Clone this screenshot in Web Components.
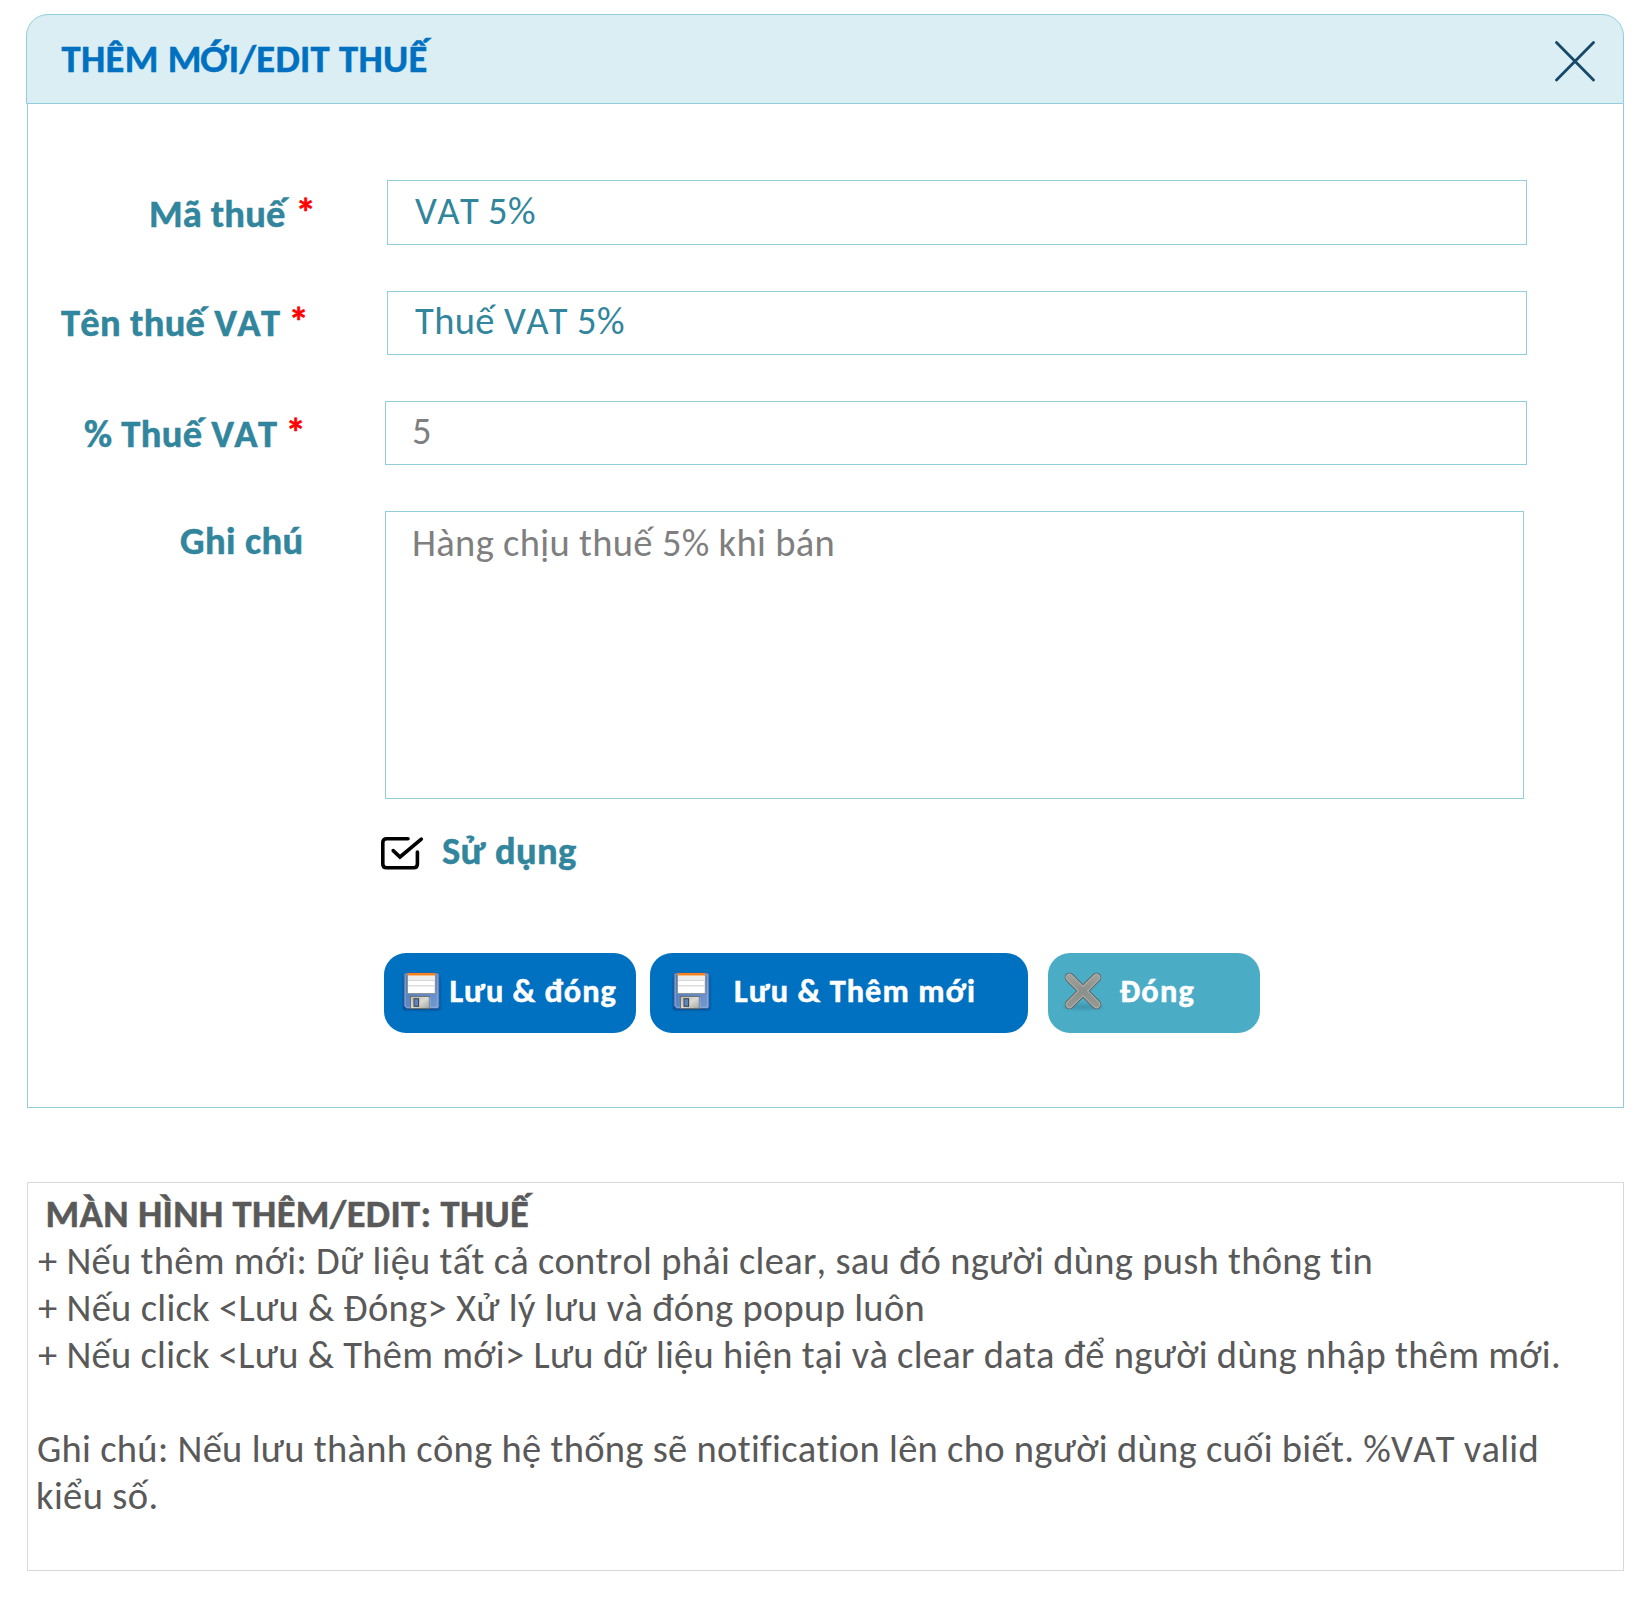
<!DOCTYPE html>
<html lang="vi">
<head>
<meta charset="utf-8">
<title>Thêm mới/Edit thuế</title>
<style>
body{margin:0;background:#fff;font-family:Carlito,Calibri,Lato,"Liberation Sans",sans-serif;font-size:38.5px;line-height:47px;color:#595959}
</style>
</head>
<body>
<tax-page></tax-page>
<script>
// One line of text whose ink spans exactly `w` pixels, tracked with letter-spacing.
class FitText extends HTMLElement {
  connectedCallback() {
    const r = this.attachShadow({mode: 'open'});
    r.innerHTML = `<style>:host{display:block;flex:none;white-space:pre;font-variant-ligatures:none;font-kerning:none}span{display:inline-block}</style><span><slot></slot></span>`;
    const span = r.querySelector('span'), text = this.textContent, cs = getComputedStyle(this);
    const c = document.createElement('canvas').getContext('2d');
    c.font = `${cs.fontWeight} ${cs.fontSize} ${cs.fontFamily}`;
    const chars = [...text];
    const left = -c.measureText(chars[0]).actualBoundingBoxLeft;
    const m = c.measureText(chars[chars.length - 1]);
    const right = m.width - m.actualBoundingBoxRight;
    const ink = span.getBoundingClientRect().width - left - right;
    const w = +this.getAttribute('w');
    if (chars.length > 1) span.style.letterSpacing = (w - ink) / (chars.length - 1) + 'px';
    span.style.marginLeft = -left + 'px';
    this.style.width = w + 'px';
    if (+cs.fontWeight >= 700) span.style.webkitTextStroke = '0.5px currentColor';
  }
}
customElements.define('fit-text', FitText);

class CloseIcon extends HTMLElement {
  connectedCallback() {
    this.attachShadow({mode: 'open'}).innerHTML = `<style>:host{display:block;width:40px;height:41px}svg{display:block}</style>
    <svg width="40" height="41" viewBox="0 0 40 41"><path d="M1.5 1.5 38.5 39M38.5 1.5 1.5 39" fill="none" stroke="#17496b" stroke-width="2.8" stroke-linecap="round"/></svg>`;
  }
}
customElements.define('close-icon', CloseIcon);

class CheckIcon extends HTMLElement {
  connectedCallback() {
    this.attachShadow({mode: 'open'}).innerHTML = `<style>:host{display:block;width:44px;height:35px}svg{display:block}</style>
    <svg width="44" height="35" viewBox="0 0 44 35"><g fill="none" stroke="#000" stroke-width="3.6" stroke-linecap="round" stroke-linejoin="round"><path d="M28 2.7H6.600Q2.800 2.7 2.800 6.500V28Q2.800 31.8 6.600 31.8H33.600Q37.400 31.8 37.400 28V16"/><path d="M13.200 14.600 20 21 41.300 3.200" stroke-linejoin="miter"/></g></svg>`;
  }
}
customElements.define('check-icon', CheckIcon);

class FloppyIcon extends HTMLElement {
  connectedCallback() {
    this.attachShadow({mode: 'open'}).innerHTML = `<style>:host{display:block;width:40px;height:42px}svg{display:block}</style>
    <svg width="40" height="42" viewBox="0 0 40 42">
      <defs><linearGradient id="b" x1="0" y1="0" x2="1" y2="1"><stop offset="0" stop-color="#5079b8"/><stop offset=".6" stop-color="#6189c6"/><stop offset="1" stop-color="#779bd2"/></linearGradient>
      <linearGradient id="m" x1="0" y1="0" x2="1" y2="1"><stop offset="0" stop-color="#b9bbb6"/><stop offset=".5" stop-color="#dadbd6"/><stop offset="1" stop-color="#a3a69f"/></linearGradient>
      <filter id="s" x="-20%" y="-20%" width="140%" height="140%"><feGaussianBlur stdDeviation="1.2"/></filter></defs>
      <rect x="1" y="5" width="37" height="34" rx="2" fill="#083b70" opacity=".75" filter="url(#s)"/>
      <path d="M3.5 2H35Q37 2 37 4V35.500Q37 37.500 35 37.500H4.500L2 35V3.500Q2 2 3.500 2Z" fill="url(#b)" stroke="#3a62a0" stroke-width="1"/>
      <path d="M3.200 35V3.200H35.800V36.300H5Z" fill="none" stroke="#9db9e2" stroke-width=".8" opacity=".8"/>
      <rect x="5.600" y="2.500" width="27.600" height="20" fill="#fff" stroke="#888a85" stroke-width=".8"/>
      <rect x="6" y="4.500" width="26.800" height="4.500" fill="#ececec"/><rect x="6" y="14" width="26.800" height="1.500" fill="#ddd"/><path d="M6 9.500H32.800" stroke="#d6d6d6"/>
      <rect x="6" y="2" width="27" height="2.500" fill="#f5811f"/>
      <rect x="8.500" y="25.500" width="18.800" height="12" fill="url(#m)" stroke="#6b6d69" stroke-width=".9"/>
      <rect x="12" y="27.700" width="4.600" height="7.600" fill="#5d85c2" stroke="#45474a" stroke-width="1.100"/>
      <path d="M28 26.500V36.500" stroke="#8fafde" stroke-width="1"/>
    </svg>`;
  }
}
customElements.define('floppy-icon', FloppyIcon);

class CrossIcon extends HTMLElement {
  connectedCallback() {
    this.attachShadow({mode: 'open'}).innerHTML = `<style>:host{display:block;width:44px;height:42px}svg{display:block}</style>
    <svg width="44" height="42" viewBox="0 0 44 42"><defs><linearGradient id="g" gradientUnits="userSpaceOnUse" x1="0" y1="2" x2="0" y2="38"><stop offset="0" stop-color="#a3a4a0"/><stop offset=".5" stop-color="#8d8f8a"/><stop offset="1" stop-color="#979994"/></linearGradient>
    <filter id="s" x="-20%" y="-80%" width="140%" height="260%"><feGaussianBlur stdDeviation="1.600"/></filter></defs>
    <ellipse cx="21.500" cy="36" rx="20" ry="3" fill="#2c7187" opacity=".35" filter="url(#s)"/>
    <g fill="none" stroke-linecap="round"><path d="M7.500 6.500 34.500 33.500M34.500 6.500 7.500 33.500" stroke="#5c6563" stroke-width="9.600"/><path d="M7.500 6.500 34.500 33.500M34.500 6.500 7.500 33.500" stroke="#b5b6b2" stroke-width="7.600"/><path d="M7.500 6.500 34.500 33.500M34.500 6.500 7.500 33.500" stroke="url(#g)" stroke-width="6"/></g></svg>`;
  }
}
customElements.define('cross-icon', CrossIcon);

// Label column, optional required mark, and a bordered field.
class FormRow extends HTMLElement {
  connectedCallback() {
    this.attachShadow({mode: 'open'}).innerHTML = `<style>
    :host{display:flex;align-items:flex-start}
    .label{box-sizing:border-box;flex:none;width:var(--lw);padding-left:var(--lx);padding-top:var(--ly);display:flex;font-weight:700;color:#31859c;gap:var(--gap,0)}
    .field{box-sizing:border-box;flex:none;width:var(--fw);height:var(--fh);border:1px solid #92cddc;padding:var(--fp);color:var(--fc,#31859c);background:#fff}
    </style><div class="label"><slot name="label"></slot><slot name="mark"></slot></div><div class="field"><slot></slot></div>`;
  }
}
customElements.define('form-row', FormRow);

class ActionButton extends HTMLElement {
  connectedCallback() {
    this.attachShadow({mode: 'open'}).innerHTML = `<style>
    :host{display:block;flex:none}
    button{box-sizing:border-box;display:flex;align-items:flex-start;width:var(--w);height:80px;border:0;border-radius:22px;padding:18px 0 0 var(--px);background:var(--bg,#0070c0);color:#fff;font:700 32.300px/40px Carlito,Calibri,Lato,sans-serif;gap:var(--g)}
    </style><button><slot name="icon"></slot><slot></slot></button>`;
  }
}
customElements.define('action-button', ActionButton);

class TaxDialog extends HTMLElement {
  connectedCallback() {
    this.attachShadow({mode: 'open'}).innerHTML = `<style>
    :host{display:block;width:1598px}
    header{box-sizing:border-box;height:90px;border:1px solid #92cddc;border-radius:22px 22px 0 0;background:#daeef3;display:flex;justify-content:space-between;align-items:flex-start;padding:20px 28px 0 34.500px;color:#0070c0;font-weight:700}
    close-icon{margin-top:6px}
    main{box-sizing:border-box;height:1004px;margin-left:1px;border:1px solid #92cddc;border-top:0;padding-top:76px}
    </style><header><slot name="title"></slot><close-icon></close-icon></header><main><slot></slot></main>`;
  }
}
customElements.define('tax-dialog', TaxDialog);

class NoteBox extends HTMLElement {
  connectedCallback() {
    this.attachShadow({mode: 'open'}).innerHTML = `<style>:host{display:block;box-sizing:border-box;width:1597px;height:389px;border:1px solid #d9d9d9;padding:7px 0 0 10px;color:#595959}</style><slot></slot>`;
  }
}
customElements.define('note-box', NoteBox);

class TaxPage extends HTMLElement {
  connectedCallback() {
    this.attachShadow({mode: 'open'}).innerHTML = `<style>
    :host{display:block;box-sizing:border-box;height:1599px;padding:14px 0 0 26px;overflow:hidden}
    .mark{color:#f00;font-size:41px}
    .r1{--lw:359px;--lx:123px;--ly:10px;--gap:8.500px;--fw:1140px;--fh:65px;--fp:6px 0 0 27px;margin-bottom:46px}
    .r2{--lw:359px;--lx:33px;--ly:8px;--gap:11.500px;--fw:1140px;--fh:64px;--fp:5px 0 0 27px;margin-bottom:46px}
    .r3{--lw:357px;--lx:56px;--ly:9px;--gap:11.500px;--fw:1142px;--fh:64px;--fp:5px 0 0 27px;--fc:#7f7f7f;margin-bottom:46px}
    .r4{--lw:357px;--lx:153px;--ly:6px;--fw:1139px;--fh:288px;--fp:7px 0 0 28px;--fc:#7f7f7f}
    .check{display:flex;padding:28px 0 0 352px;gap:18px;color:#31859c;font-weight:700}
    .check check-icon{margin-top:9px}
    .actions{display:flex;padding:79px 0 0 356px}
    .b1{--w:252px;--px:18px;--g:8.500px;margin-right:14px}
    .b2{--w:378px;--px:22px;--g:23px;margin-right:20px}
    .b3{--w:212px;--px:14px;--g:13.500px;--bg:#4bacc6}
    note-box{margin:74px 0 0 1px}
    note-box .h{font-weight:700;margin-left:9.500px}
    .gap{height:47px}
    </style>
    <tax-dialog>
      <fit-text slot="title" w="370">THÊM MỚI/EDIT THUẾ</fit-text>
      <form-row class="r1"><fit-text slot="label" w="139">Mã thuế</fit-text><fit-text slot="mark" class="mark" w="15">*</fit-text><fit-text w="120">VAT 5%</fit-text></form-row>
      <form-row class="r2"><fit-text slot="label" w="219">Tên thuế VAT</fit-text><fit-text slot="mark" class="mark" w="15">*</fit-text><fit-text w="209">Thuế VAT 5%</fit-text></form-row>
      <form-row class="r3"><fit-text slot="label" w="193">% Thuế VAT</fit-text><fit-text slot="mark" class="mark" w="15">*</fit-text><fit-text w="17">5</fit-text></form-row>
      <form-row class="r4"><fit-text slot="label" w="120.500">Ghi chú</fit-text><fit-text w="418.500">Hàng chịu thuế 5% khi bán</fit-text></form-row>
      <div class="check"><check-icon></check-icon><fit-text w="134">Sử dụng</fit-text></div>
      <div class="actions">
        <action-button class="b1"><floppy-icon slot="icon"></floppy-icon><fit-text w="165">Lưu &amp; đóng</fit-text></action-button>
        <action-button class="b2"><floppy-icon slot="icon"></floppy-icon><fit-text w="239">Lưu &amp; Thêm mới</fit-text></action-button>
        <action-button class="b3"><cross-icon slot="icon"></cross-icon><fit-text w="74">Đóng</fit-text></action-button>
      </div>
    </tax-dialog>
    <note-box>
      <fit-text class="h" w="485.500">MÀN HÌNH THÊM/EDIT: THUẾ</fit-text>
      <fit-text w="1332.500">+ Nếu thêm mới: Dữ liệu tất cả control phải clear, sau đó người dùng push thông tin</fit-text>
      <fit-text w="884.500">+ Nếu click &lt;Lưu &amp; Đóng&gt; Xử lý lưu và đóng popup luôn</fit-text>
      <fit-text w="1521">+ Nếu click &lt;Lưu &amp; Thêm mới&gt; Lưu dữ liệu hiện tại và clear data để người dùng nhập thêm mới.</fit-text>
      <div class="gap"></div>
      <fit-text w="1498.500">Ghi chú: Nếu lưu thành công hệ thống sẽ notification lên cho người dùng cuối biết. %VAT valid</fit-text>
      <fit-text w="118.500">kiểu số.</fit-text>
    </note-box>`;
  }
}
customElements.define('tax-page', TaxPage);
</script>
</body>
</html>
